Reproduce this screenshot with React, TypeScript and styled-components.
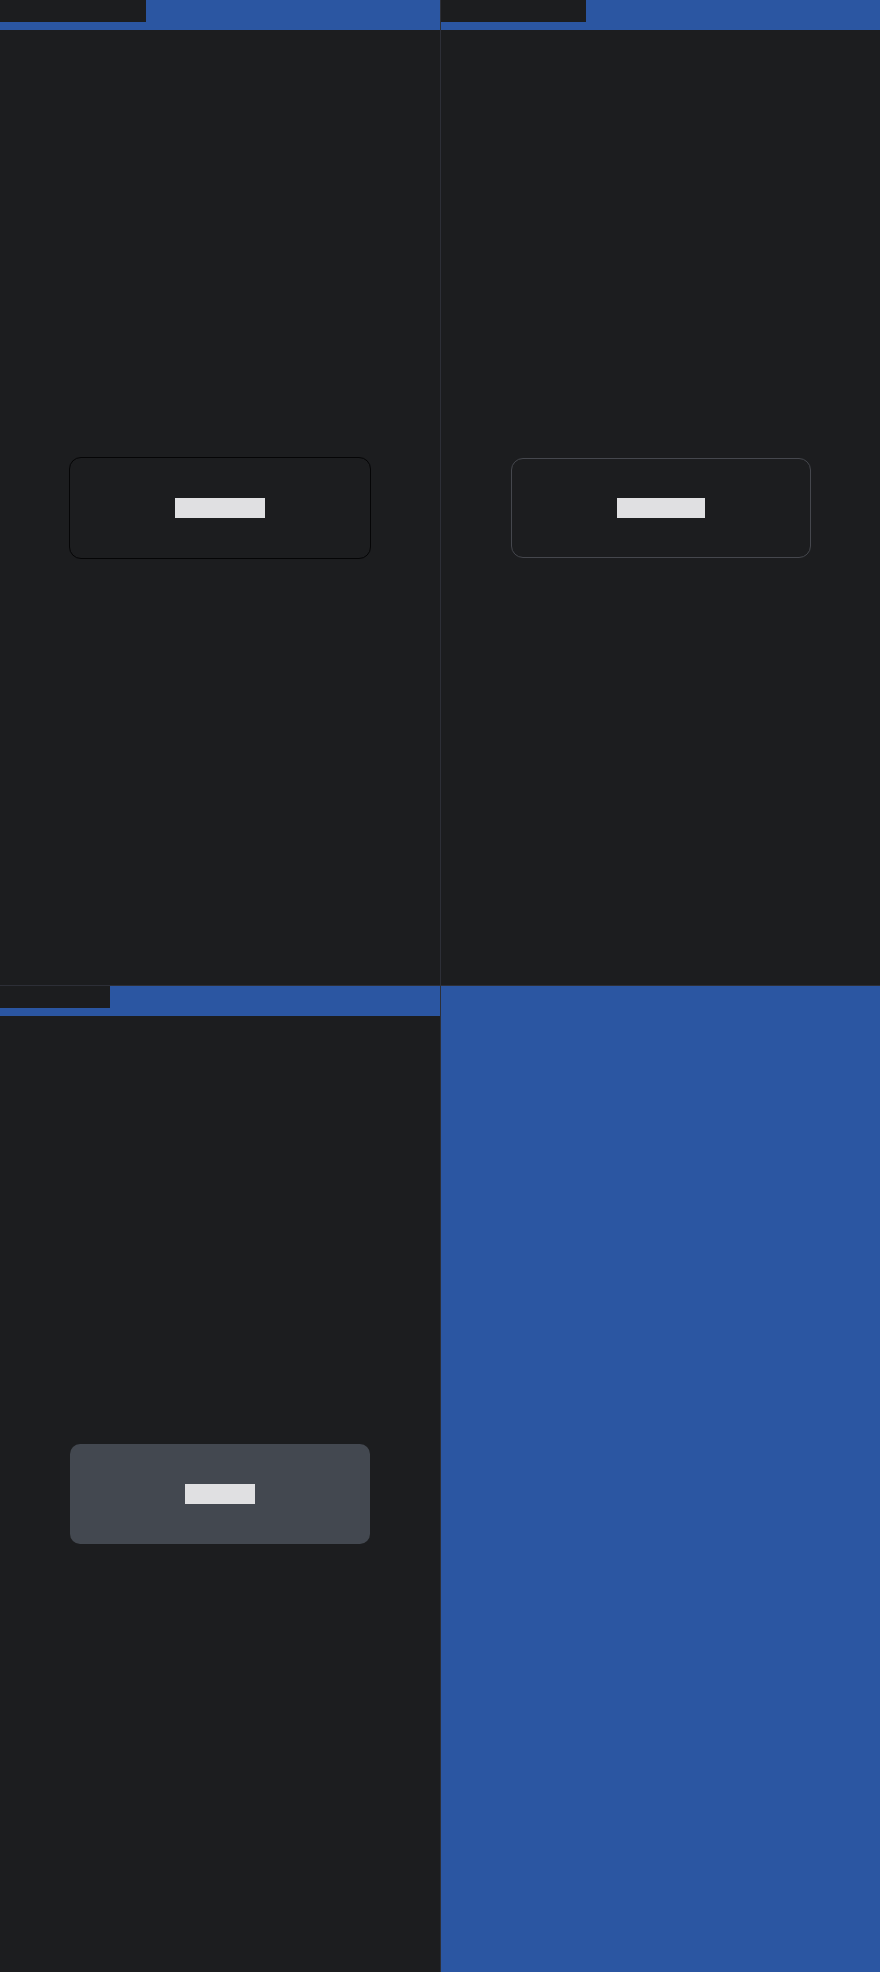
import React from "react";
import styled, { createGlobalStyle, css } from "styled-components";

const GlobalStyle = createGlobalStyle`
  html, body {
    margin: 0;
    padding: 0;
    background: #1c1d1f;
  }
  * {
    box-sizing: border-box;
  }
`;

type Variant = "outlined" | "ghost" | "filled";

const panes: { tab: number; label: string; labelWidth: number; variant: Variant }[] = [
  { tab: 146, label: "Outlined", labelWidth: 90, variant: "outlined" },
  { tab: 145, label: "Bordered", labelWidth: 88, variant: "ghost" },
  { tab: 110, label: "Filled", labelWidth: 70, variant: "filled" },
];

function App() {
  return (
    <>
      <GlobalStyle />
      <Grid>
        {panes.map((p) => (
          <Pane key={p.label}>
            <TabBar>
              <Tab $width={p.tab}>{p.label}.tsx</Tab>
            </TabBar>
            <Stage>
              <Button $variant={p.variant}>
                <Label $width={p.labelWidth}>{p.label}</Label>
              </Button>
            </Stage>
          </Pane>
        ))}
        <EmptyPane />
      </Grid>
    </>
  );
}

const Grid = styled.div`
  display: grid;
  grid-template-columns: 440px 1fr;
  grid-template-rows: 985px 986px;
  gap: 1px;
  height: 1972px;
  background: #2d2f37;
  font-family: "Liberation Sans", Arial, sans-serif;
`;

const Pane = styled.section`
  display: flex;
  flex-direction: column;
  background: #1c1d1f;
  min-width: 0;
`;

const EmptyPane = styled.section`
  background: #2b56a2;
`;

const TabBar = styled.div`
  height: 30px;
  flex: 0 0 30px;
  display: flex;
  align-items: flex-start;
  background: #2b56a2;
`;

const Tab = styled.div<{ $width: number }>`
  width: ${(p) => p.$width}px;
  height: 22px;
  background: #1c1d1f;
  color: #1c1d1f;
  font-size: 12px;
  line-height: 22px;
  overflow: hidden;
  white-space: nowrap;
`;

const Stage = styled.div`
  flex: 1;
  display: flex;
  align-items: center;
  justify-content: center;
`;

const Button = styled.button<{ $variant: Variant }>`
  width: 300px;
  height: 100px;
  display: flex;
  align-items: center;
  justify-content: center;
  border-radius: 12px;
  padding: 0;
  font: inherit;
  cursor: pointer;
  ${(p) =>
    p.$variant === "outlined" &&
    css`
      width: 302px;
      height: 102px;
      background: #1c1d1f;
      border: 1px solid #050506;
    `}
  ${(p) =>
    p.$variant === "ghost" &&
    css`
      background: #1c1d1f;
      border: 1px solid #45474d;
    `}
  ${(p) =>
    p.$variant === "filled" &&
    css`
      background: #434850;
      border: none;
      border-radius: 10px;
    `}
`;

const Label = styled.span<{ $width: number }>`
  display: block;
  width: ${(p) => p.$width}px;
  height: 20px;
  line-height: 20px;
  font-size: 14px;
  background: #e0e0e2;
  color: #e0e0e2;
  overflow: hidden;
  white-space: nowrap;
`;

export default App;
